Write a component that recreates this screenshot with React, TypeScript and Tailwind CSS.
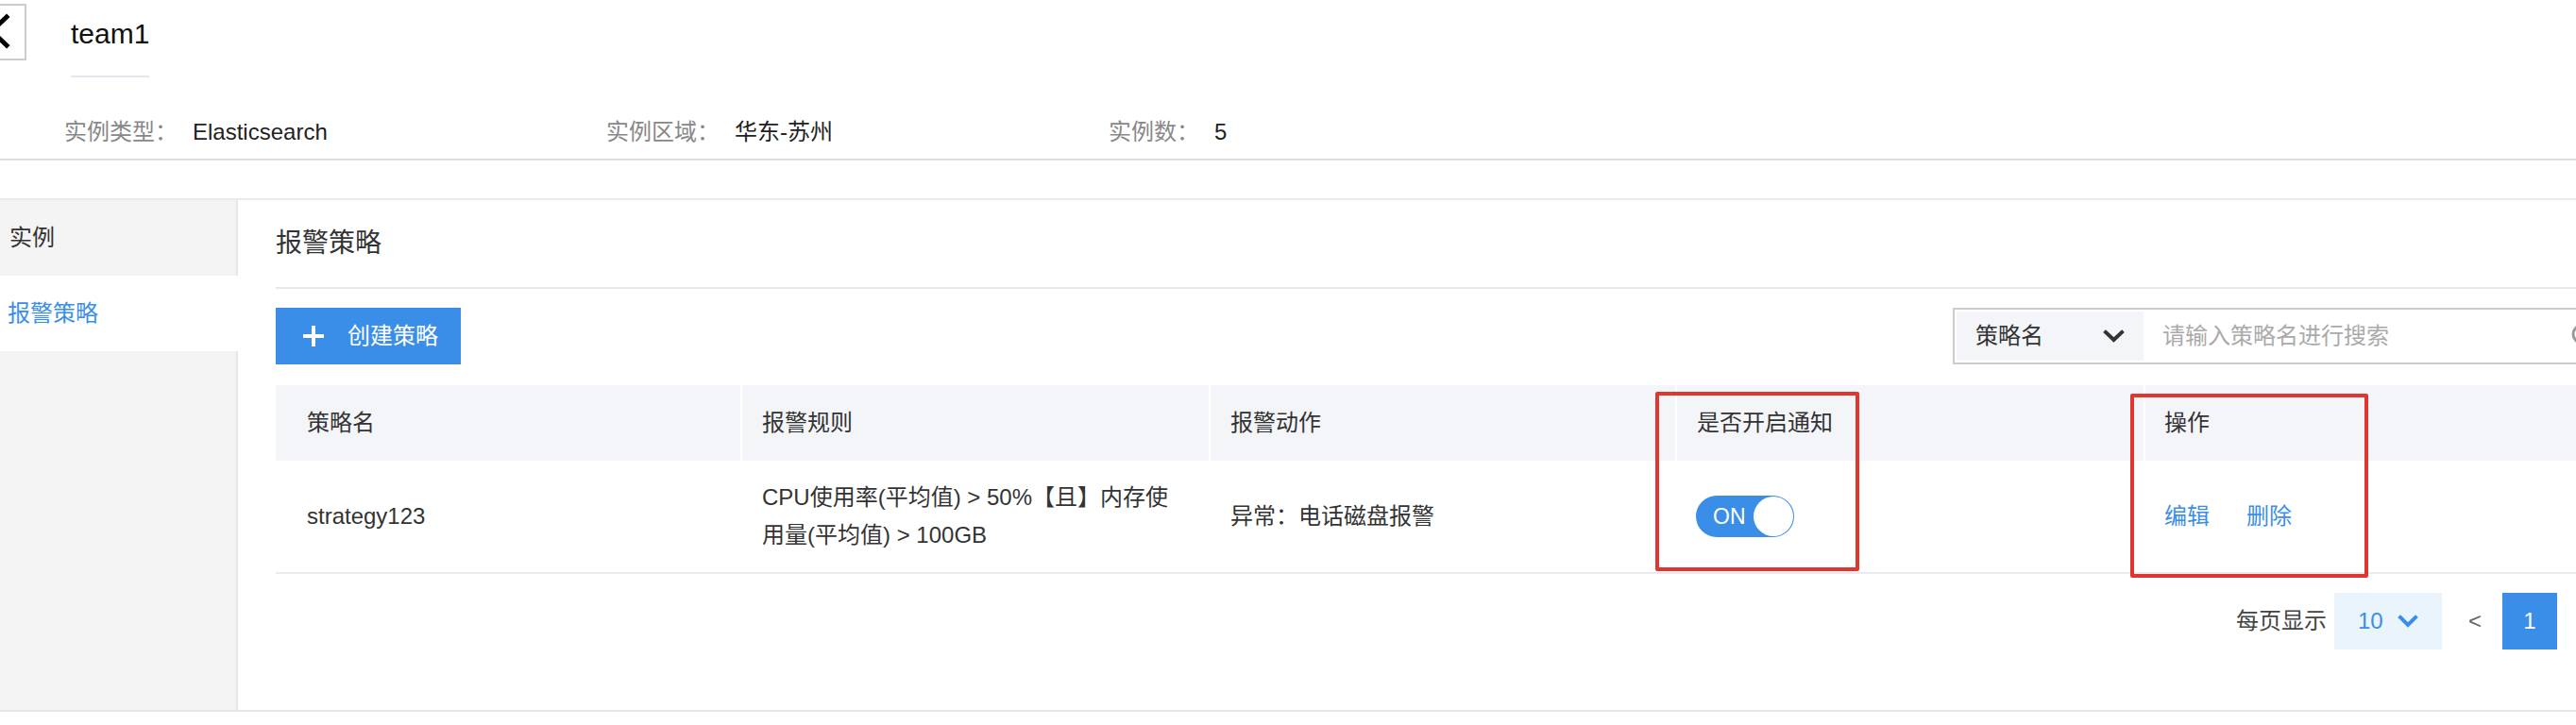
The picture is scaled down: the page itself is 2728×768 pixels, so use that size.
import React from "react";

function Chevron({ color, w, h, sw }: { color: string; w: number; h: number; sw: number }) {
  return (
    <svg width={w} height={h} viewBox={`0 0 ${w} ${h}`} fill="none">
      <polyline
        points={`${sw / 2 + 1},${sw / 2 + 1} ${w / 2},${h - sw / 2 - 1} ${w - sw / 2 - 1},${sw / 2 + 1}`}
        stroke={color}
        strokeWidth={sw}
        strokeLinecap="square"
        strokeLinejoin="miter"
      />
    </svg>
  );
}

export default function App() {
  return (
    <div className="relative w-[2728px] h-[768px] overflow-hidden bg-white font-['Liberation_Sans','Noto_Sans_CJK_SC',sans-serif] text-[#333333]">
      {/* Header */}
      <div className="h-[168px] flex flex-col">
        <div className="flex items-start">
          <div className="mt-[4px] ml-[-32px] w-[60px] h-[60px] border-2 border-[#cccccc] flex items-center justify-center shrink-0">
            <svg width="56" height="56" viewBox="0 0 56 56" fill="none">
              <polyline points="37,12 21,27 37,42" stroke="#000000" strokeWidth="5" strokeLinecap="square" />
            </svg>
          </div>
          <div className="ml-[47px] pt-[21px] flex flex-col">
            <div className="text-[30px] leading-[30px] text-[#111111]">team1</div>
            <div className="mt-[29px] h-[2px] bg-[#e6e6ee]" />
          </div>
        </div>
        <div className="mt-[34px] h-[48px] flex items-center pl-[68px] text-[24px] leading-[48px]">
          <div className="w-[574px] flex shrink-0">
            <span className="text-[#888888] mr-[16px]">实例类型：</span>
            <span className="text-[#222222]">Elasticsearch</span>
          </div>
          <div className="w-[532px] flex shrink-0">
            <span className="text-[#888888] mr-[16px]">实例区域：</span>
            <span className="text-[#222222]">华东-苏州</span>
          </div>
          <div className="flex shrink-0">
            <span className="text-[#888888] mr-[16px]">实例数：</span>
            <span className="text-[#222222]">5</span>
          </div>
        </div>
      </div>
      <div className="h-[2px] bg-[#dddddd]" />
      <div className="h-[40px]" />

      {/* Panel */}
      <div className="h-[544px] border-t-2 border-b-2 border-t-[#ebebeb] border-b-[#e6e6e6] flex">
        {/* Sidebar */}
        <div className="w-[252px] shrink-0 h-full bg-[#f4f4f4] border-r-2 border-[#e6e6e6] flex flex-col">
          <div className="h-[80px] flex items-center pl-[10px] text-[24px] text-[#333333]">实例</div>
          <div className="h-[80px] w-[252px] bg-white flex items-center pl-[8px] text-[24px] text-[#3b8ee8]">报警策略</div>
        </div>

        {/* Main */}
        <div className="w-[2520px] shrink-0 pl-[40px] flex flex-col">
          <div className="h-[92px] flex items-center text-[28px] text-[#333333]">报警策略</div>
          <div className="h-[2px] bg-[#e8e8ee]" />

          {/* Toolbar */}
          <div className="mt-[20px] h-[60px] flex justify-between">
            <div className="w-[196px] h-[60px] bg-[#3b8ee8] flex items-center pl-[28px] text-white text-[24px]">
              <svg width="24" height="24" viewBox="0 0 24 24" fill="none">
                <path d="M12 1v22M1 12h22" stroke="#ffffff" strokeWidth="4" />
              </svg>
              <span className="ml-[24px]">创建策略</span>
            </div>
            <div className="w-[704px] h-[60px] border-2 border-[#cccccc] p-[2px] flex">
              <div className="w-[198px] h-full bg-[#f4f5f9] flex items-center justify-between pl-[20px] pr-[20px] text-[24px] text-[#333333]">
                <span>策略名</span>
                <Chevron color="#333333" w={23} h={14} sw={4} />
              </div>
              <div className="flex-1 flex items-center justify-between pl-[20px] pr-[18px] text-[24px] text-[#aaaaaa]">
                <span>请输入策略名进行搜索</span>
                <svg width="28" height="28" viewBox="0 0 28 28" fill="none">
                  <circle cx="12" cy="12" r="9" stroke="#999999" strokeWidth="3" />
                  <path d="M19 19l7 7" stroke="#999999" strokeWidth="3" strokeLinecap="round" />
                </svg>
              </div>
            </div>
          </div>

          {/* Table */}
          <div className="mt-[22px] w-[2480px]">
            <div className="grid grid-cols-[492px_496px_494px_496px_502px] h-[80px] bg-[#f4f5f9] text-[24px] text-[#333333]">
              <div className="flex items-center pl-[33px]">策略名</div>
              <div className="flex items-center pl-[21px] border-l-2 border-white">报警规则</div>
              <div className="flex items-center pl-[21px] border-l-2 border-white">报警动作</div>
              <div className="flex items-center pl-[21px] border-l-2 border-white">是否开启通知</div>
              <div className="flex items-center pl-[20px] border-l-2 border-white">操作</div>
            </div>
            <div className="grid grid-cols-[492px_496px_494px_496px_502px] h-[120px] border-b-2 border-[#e9ebf0] text-[24px] text-[#333333]">
              <div className="flex items-center pl-[33px]">strategy123</div>
              <div className="flex items-center pl-[23px] leading-[40px]">
                <span>
                  CPU使用率(平均值) &gt; 50%【且】内存使
                  <br />
                  用量(平均值) &gt; 100GB
                </span>
              </div>
              <div className="flex items-center pl-[23px]">异常：电话磁盘报警</div>
              <div className="flex items-center pl-[22px]">
                <div className="w-[104px] h-[44px] rounded-full bg-[#3b8ee8] flex items-center justify-between pl-[18px] pr-[1px]">
                  <span className="text-white text-[23px] leading-[24px]">ON</span>
                  <div className="w-[42px] h-[42px] rounded-full bg-white" />
                </div>
              </div>
              <div className="flex items-center pl-[22px] gap-[39px] text-[#3b8ee8]">
                <span>编辑</span>
                <span>删除</span>
              </div>
            </div>

            {/* Pagination */}
            <div className="mt-[20px] h-[60px] flex items-center justify-end pr-[64px] text-[24px]">
              <span className="text-[#444444] mr-[8px]">每页显示</span>
              <div className="w-[114px] h-[60px] bg-[#eaf4fd] flex items-center pl-[25px] text-[#3b8ee8]">
                <span>10</span>
                <span className="ml-[15px] flex items-center">
                  <Chevron color="#3b8ee8" w={22} h={14} sw={4} />
                </span>
              </div>
              <div className="ml-[6px] w-[58px] h-[60px] flex items-center justify-center text-[#666666]">&lt;</div>
              <div className="w-[58px] h-[60px] bg-[#3b8ee8] flex items-center justify-center text-white">1</div>
            </div>
          </div>
        </div>
      </div>

      {/* Annotation boxes */}
      <div className="absolute left-[1753px] top-[415px] w-[216px] h-[190px] border-4 border-[#e0362f] rounded-[2px]" />
      <div className="absolute left-[2256px] top-[417px] w-[252px] h-[195px] border-4 border-[#e0362f] rounded-[2px]" />
    </div>
  );
}
